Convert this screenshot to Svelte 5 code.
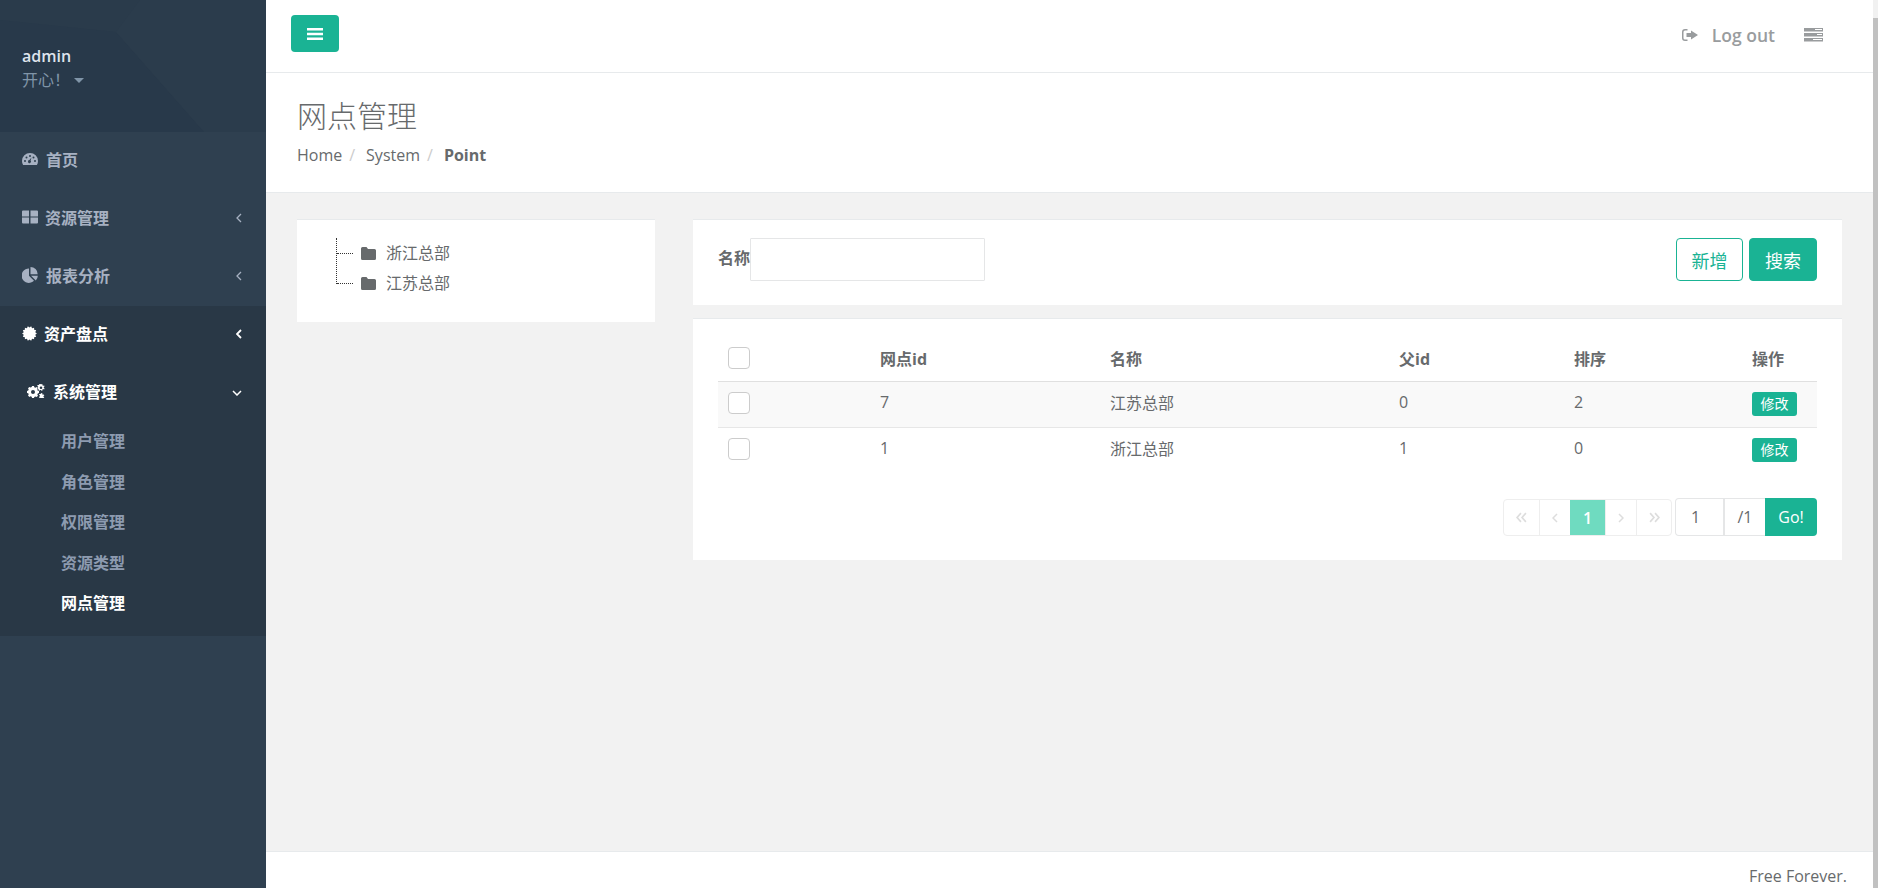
<script>
  const menu = [
    { label: "资源管理", icon: "grid" },
    { label: "报表分析", icon: "pie" }
  ];
  const subItems = ["用户管理", "角色管理", "权限管理", "资源类型", "网点管理"];
  const rows = [
    { id: 7, name: "江苏总部", parent: 0, sort: 2 },
    { id: 1, name: "浙江总部", parent: 1, sort: 0 }
  ];
  const tree = ["浙江总部", "江苏总部"];
  // toothed seal for the 资产盘点 icon
  const sealPoints = Array.from({ length: 28 }, (_, i) => {
    const r = i % 2 ? 5.9 : 7.4;
    const a = (i / 28) * Math.PI * 2;
    return `${(7.5 + r * Math.cos(a)).toFixed(2)},${(7.5 + r * Math.sin(a)).toFixed(2)}`;
  }).join(" ");
</script>

<div class="page">
  <nav class="sidebar">
    <div class="profile">
      <svg class="pattern" viewBox="0 0 266 132" preserveAspectRatio="none" aria-hidden="true">
        <polygon points="0,0 266,0 266,132 0,132" fill="#2a3b4b" />
        <polygon points="0,20 116,32 204,132 0,132" fill="#28394a" />
        <polygon points="116,32 140,0 266,0 266,132 204,132" fill="#2b3c4c" />
      </svg>
      <div class="profileText">
        <span class="userName">admin</span>
        <span class="mood">开心！<i class="caret"></i></span>
      </div>
    </div>

    <a class="navItem" href="#home">
      <svg class="navIcon" viewBox="0 0 16 12"><path fill="currentColor" fill-rule="evenodd" d="M8 0a8 8 0 0 1 8 8c0 1.500-.4 2.900-1.100 4H1.100A8 8 0 0 1 0 8a8 8 0 0 1 8-8zM3 7a1 1 0 1 0 0 2 1 1 0 0 0 0-2zm1.500-3.500a1 1 0 1 0 0 2 1 1 0 0 0 0-2zM8 2a1 1 0 1 0 0 2 1 1 0 0 0 0-2zm3.500 1.500a1 1 0 1 0 0 2 1 1 0 0 0 0-2zM13 7a1 1 0 1 0 0 2 1 1 0 0 0 0-2zM9.500 4.500 7.400 7.100a1.500 1.500 0 1 0 1.200.5z" /></svg>
      <span>首页</span>
    </a>
    {#each menu as item}
      <a class="navItem" href="#menu">
        {#if item.icon === "grid"}
          <svg class="navIcon gridIcon" viewBox="0 0 16 13"><path fill="currentColor" d="M0 1a1 1 0 0 1 1-1h6v6H0zM8.500 0H15a1 1 0 0 1 1 1v5H8.500zM0 7h7v6H1a1 1 0 0 1-1-1zM8.500 7H16v5a1 1 0 0 1-1 1H8.500z" /></svg>
        {:else}
          <svg class="navIcon" viewBox="0 0 16 16"><path fill="currentColor" d="M7 1.500V8.700l5 5A7.200 7.200 0 1 1 7 1.500zM8.500 0A7.200 7.200 0 0 1 15.700 7.200H8.500zM9 8.700h6.800a7.200 7.200 0 0 1-2 4.800z" /></svg>
        {/if}
        <span>{item.label}</span>
        <svg class="chevron" viewBox="0 0 6 10"><path d="M5 1 1 5l4 4" fill="none" stroke="currentColor" stroke-width="1.300" /></svg>
      </a>
    {/each}

    <div class="activeGroup">
      <a class="navItem active" href="#assets">
        <svg class="navIcon seal" viewBox="0 0 15 15"><polygon fill="currentColor" points={sealPoints} /></svg>
        <span>资产盘点</span>
        <svg class="chevron" viewBox="0 0 6 10"><path d="M5 1 1 5l4 4" fill="none" stroke="currentColor" stroke-width="1.800" /></svg>
      </a>
      <a class="navItem active nested" href="#system">
        <svg class="navIcon cogs" viewBox="0 0 18 14"><path fill="currentColor" fill-rule="evenodd" d="M5 2h2l.3 1.300 1.100.5 1.200-.7 1.400 1.400-.7 1.200.5 1.100 1.200.3v2l-1.200.3-.5 1.100.7 1.200-1.400 1.400-1.200-.7-1.100.5L7 14H5l-.3-1.300-1.100-.5-1.200.7L1 11.500l.7-1.200-.5-1.100L0 8.900v-2l1.200-.3.500-1.100L1 4.300l1.400-1.400 1.200.7 1.100-.5zM6 5.900a2 2 0 1 0 0 4 2 2 0 0 0 0-4zM14.500 0l1 .3-.1 1 .8.500.9-.4.500.9-.8.600v1l.8.600-.5.900-.9-.4-.8.500.1 1-1 .3-.6-.8h-.9l-.6.800-.9-.5.200-.9-.6-.7-1 .1.100-1 .9-.5 0-.9-.9-.5.400-1 1 .2.700-.6 0-1 1-.1.400.9h1zM14 2.500a1.300 1.300 0 1 0 0 2.600 1.300 1.300 0 0 0 0-2.600zM14.500 9l.9.300-.1.900.7.600.9-.3.400.9-.8.600v.9l.8.600-.4.500h-3.400l-.6-.3-.9.100.1-1 .8-.5-.1-1-.8-.5.400-.9.900.2.700-.6z" /></svg>
        <span>系统管理</span>
        <svg class="chevron down" viewBox="0 0 10 6"><path d="M1 1l4 4 4-4" fill="none" stroke="currentColor" stroke-width="1.500" /></svg>
      </a>
      <ul class="subMenu">
        {#each subItems as sub, i}
          <li class:current={i === subItems.length - 1}>{sub}</li>
        {/each}
      </ul>
    </div>
  </nav>

  <div class="main">
    <header class="topBar">
      <button class="toggle" aria-label="menu">
        <svg viewBox="0 0 16 14" width="16" height="14"><path fill="#fff" d="M0 1h16v2.500H0zM0 5.800h16v2.500H0zM0 10.500h16V13H0z" /></svg>
      </button>
      <div class="topRight">
        <svg class="logoutIcon" viewBox="0 0 16 14"><path fill="#999c9e" d="M5.500 1H3a3 3 0 0 0-3 3v6a3 3 0 0 0 3 3h2.500v-1.500H3A1.500 1.500 0 0 1 1.500 10V4A1.500 1.500 0 0 1 3 2.500h2.500zM9 2.500 16 7l-7 4.500V9H4.500V5H9z" /></svg>
        <span class="logout">Log out</span>
        <svg class="tasksIcon" viewBox="0 0 19 14"><path fill="#999c9e" fill-rule="evenodd" d="M0 0h19v3.500H0zM11 1v1h7V1zM0 5h19v3.500H0zM13 6v1h5V6zM0 10h19v3.500H0zM9 11v1h9v-1z" /></svg>
      </div>
    </header>

    <section class="titleBar">
      <h2>网点管理</h2>
      <div class="crumbs">
        <span>Home</span><i>/</i>
        <span>System</span><i>/</i>
        <strong>Point</strong>
      </div>
    </section>

    <div class="content">
      <aside class="treeCard">
        <ul class="tree">
          {#each tree as node}
            <li>
              <svg class="folder" viewBox="0 0 15 13"><path fill="#676a6c" d="M1.500 0h4l1.500 2h6.500A1.500 1.500 0 0 1 15 3.500v8a1.500 1.500 0 0 1-1.500 1.500h-12A1.500 1.500 0 0 1 0 11.500v-10A1.500 1.500 0 0 1 1.500 0z" /></svg>
              <span class="nodeName">{node}</span>
            </li>
          {/each}
        </ul>
      </aside>

      <div class="rightCol">
        <div class="card searchCard">
          <label class="field">
            <span class="fieldName">名称</span>
            <input type="text" />
          </label>
          <div class="actions">
            <button class="btn outline">新增</button>
            <button class="btn primary">搜索</button>
          </div>
        </div>

        <div class="card tableCard">
          <table>
            <colgroup>
              <col style="width:152px" /><col style="width:230px" /><col style="width:289px" />
              <col style="width:175px" /><col style="width:178px" /><col style="width:75px" />
            </colgroup>
            <thead>
              <tr>
                <th><span class="check"></span></th>
                <th>网点id</th>
                <th>名称</th>
                <th>父id</th>
                <th>排序</th>
                <th>操作</th>
              </tr>
            </thead>
            <tbody>
              {#each rows as row}
                <tr>
                  <td><span class="check"></span></td>
                  <td>{row.id}</td>
                  <td>{row.name}</td>
                  <td>{row.parent}</td>
                  <td>{row.sort}</td>
                  <td class="opCell"><span class="editTag">修改</span></td>
                </tr>
              {/each}
            </tbody>
          </table>

          <div class="pagerRow">
            <div class="pager">
              <span class="pageCell">
                <svg viewBox="0 0 10 10" width="11" height="11"><path d="M4.500 1 1 5l3.500 4M9 1 5.500 5 9 9" fill="none" stroke="currentColor" stroke-width="1.500" /></svg>
              </span>
              <span class="pageCell narrow">
                <svg viewBox="0 0 6 10" width="6" height="10"><path d="M5 1 1 5l4 4" fill="none" stroke="currentColor" stroke-width="1.500" /></svg>
              </span>
              <span class="pageCell on">1</span>
              <span class="pageCell narrow">
                <svg viewBox="0 0 6 10" width="6" height="10"><path d="M1 1l4 4-4 4" fill="none" stroke="currentColor" stroke-width="1.500" /></svg>
              </span>
              <span class="pageCell">
                <svg viewBox="0 0 10 10" width="11" height="11"><path d="M1 1l3.500 4L1 9M5.500 1 9 5 5.500 9" fill="none" stroke="currentColor" stroke-width="1.500" /></svg>
              </span>
            </div>
            <div class="goGroup">
              <span class="pageInput">1</span>
              <span class="pageTotal">/1</span>
              <button class="goBtn">Go!</button>
            </div>
          </div>
        </div>
      </div>
    </div>

    <footer class="footer">Free Forever.</footer>
  </div>

  <div class="scrollTrack"><div class="scrollThumb"></div></div>
</div>

<style>
  :global(body) {
    margin: 0;
    font-family: "Open Sans", "Noto Sans CJK SC", sans-serif;
    font-size: 16px;
    color: #676a6c;
    overflow: hidden;
  }
  .page {
    display: flex;
    width: 1878px;
    height: 888px;
    overflow: hidden;
  }
  .sidebar {
    width: 266px;
    flex: none;
    background: #2f4050;
    color: #a7b1c2;
  }
  .profile {
    position: relative;
    height: 132px;
    box-sizing: border-box;
    padding: 45px 0 0 22px;
    overflow: hidden;
  }
  .pattern {
    position: absolute;
    inset: 0;
    width: 100%;
    height: 100%;
  }
  .profileText {
    position: relative;
    display: flex;
    flex-direction: column;
  }
  .userName {
    color: #dfe4ed;
    font-weight: 600;
    line-height: 23px;
  }
  .mood {
    color: #8095a8;
    line-height: 24px;
    display: flex;
    align-items: center;
  }
  .caret {
    width: 0;
    height: 0;
    margin-left: 4px;
    border-left: 5px solid transparent;
    border-right: 5px solid transparent;
    border-top: 5px solid #8095a8;
  }
  .navItem {
    display: flex;
    align-items: center;
    height: 58px;
    box-sizing: border-box;
    padding: 0 0 4px 22px;
    position: relative;
    color: #a7b1c2;
    text-decoration: none;
    font-weight: 600;
  }
  .navIcon {
    width: 16px;
    height: 16px;
    flex: none;
    margin-right: 8px;
  }
  .gridIcon {
    margin-right: 7px;
  }
  .chevron {
    position: absolute;
    right: 24px;
    top: 23px;
    width: 6px;
    height: 10px;
  }
  .chevron.down {
    width: 10px;
    height: 6px;
    top: 26px;
  }
  .activeGroup {
    background: #293846;
    height: 330px;
  }
  .navItem.active {
    color: #fff;
  }
  .seal {
    width: 15px;
    height: 15px;
    margin-right: 7px;
  }
  .nested {
    padding-left: 27px;
  }
  .cogs {
    width: 18px;
    height: 14px;
    margin-right: 8px;
  }
  .subMenu {
    list-style: none;
    margin: 0;
    padding: 0 0 0 61px;
  }
  .subMenu li {
    height: 40.500px;
    line-height: 40.500px;
    position: relative;
    top: -1px;
    font-weight: 600;
    color: #8d9bb0;
  }
  .subMenu li.current {
    color: #fff;
  }
  .main {
    flex: 1;
    display: flex;
    flex-direction: column;
    background: #f2f2f2;
    min-width: 0;
  }
  .topBar {
    height: 73px;
    flex: none;
    box-sizing: border-box;
    background: #fff;
    border-bottom: 1px solid #e7eaec;
    display: flex;
    align-items: flex-start;
    justify-content: space-between;
    padding: 15px 50px 0 25px;
  }
  .toggle {
    width: 48px;
    height: 37px;
    background: #1ab394;
    border: 0;
    border-radius: 4px;
    padding: 0;
    display: flex;
    align-items: center;
    justify-content: center;
  }
  .topRight {
    display: flex;
    align-items: center;
    height: 39px;
    color: #999c9e;
    font-weight: 600;
  }
  .logoutIcon {
    width: 16px;
    height: 14px;
    margin-right: 14px;
  }
  .logout {
    font-size: 17.500px;
    margin-right: 29px;
  }
  .tasksIcon {
    width: 19px;
    height: 14px;
  }
  .titleBar {
    height: 120px;
    flex: none;
    box-sizing: border-box;
    background: #fff;
    border-bottom: 1px solid #e7eaec;
    padding: 0 0 0 31px;
  }
  h2 {
    margin: 22px 0 0;
    font-size: 30px;
    font-weight: 300;
    line-height: 42px;
  }
  .crumbs {
    margin-top: 6px;
    line-height: 24px;
    display: flex;
  }
  .crumbs i {
    font-style: normal;
    color: #ccc;
    margin: 0 11px 0 7px;
  }
  .crumbs strong {
    font-weight: 700;
  }
  .content {
    flex: 1;
    display: flex;
    align-items: flex-start;
    gap: 38px;
    padding: 26px 31px 0 31px;
    min-height: 0;
  }
  .treeCard {
    width: 358px;
    height: 103px;
    flex: none;
    background: #fff;
    border-top: 1px solid #e7eaec;
    box-sizing: border-box;
    padding-top: 18px;
  }
  .tree {
    list-style: none;
    margin: 0 0 0 39px;
    padding: 0;
    height: 46px;
    border-left: 1px dotted #333;
  }
  .tree li {
    height: 30px;
    display: flex;
    align-items: center;
    position: relative;
    padding-left: 24px;
  }
  .tree li::before {
    content: "";
    position: absolute;
    left: 0;
    top: 15px;
    width: 16px;
    border-top: 1px dotted #333;
  }
  .nodeName {
    position: relative;
    top: -1px;
  }
  .folder {
    width: 15px;
    height: 13px;
    margin-right: 10px;
  }
  .rightCol {
    flex: 1;
    min-width: 0;
    display: flex;
    flex-direction: column;
    gap: 13px;
  }
  .card {
    background: #fff;
    border-top: 1px solid #e7eaec;
    box-sizing: border-box;
  }
  .searchCard {
    height: 86px;
    display: flex;
    align-items: flex-start;
    justify-content: space-between;
    padding: 18px 25px 0;
  }
  .field {
    display: flex;
    align-items: center;
    font-weight: 700;
  }
  .fieldName {
    position: relative;
    top: -3px;
  }
  .field input {
    width: 235px;
    height: 43px;
    box-sizing: border-box;
    border: 1px solid #e5e6e7;
    border-radius: 1px;
    outline: none;
  }
  .actions {
    display: flex;
    gap: 6px;
  }
  .btn {
    height: 43px;
    border-radius: 4px;
    font: inherit;
    font-size: 18px;
    padding: 0;
  }
  .outline {
    width: 67px;
    background: #fff;
    border: 1px solid #1ab394;
    color: #1ab394;
  }
  .primary {
    width: 68px;
    background: #1ab394;
    border: 1px solid #1ab394;
    color: #fff;
  }
  .tableCard {
    height: 242px;
    padding: 0 25px;
  }
  table {
    width: 1099px;
    table-layout: fixed;
    border-collapse: collapse;
  }
  th {
    height: 62px;
    padding: 16px 0 0 10px;
    box-sizing: border-box;
    text-align: left;
    font-weight: 700;
    border-bottom: 1px solid #e0e0e0;
  }
  td {
    height: 46px;
    box-sizing: border-box;
    padding: 0 0 4px 10px;
    border-bottom: 1px solid #e7e7e7;
  }
  td:first-child {
    padding-bottom: 2px;
  }
  td.opCell {
    padding-bottom: 0;
  }
  tbody tr:first-child td {
    background: #f9f9f9;
  }
  tbody tr:last-child td {
    border-bottom: 0;
  }
  .check {
    display: block;
    width: 20px;
    height: 20px;
    border: 1px solid #ccc;
    border-radius: 4px;
    background: #fff;
  }
  .editTag {
    display: inline-block;
    width: 45px;
    height: 24px;
    line-height: 24px;
    text-align: center;
    font-size: 14px;
    color: #fff;
    background: #1ab394;
    border-radius: 3px;
  }
  .pagerRow {
    display: flex;
    justify-content: flex-end;
    align-items: flex-end;
    gap: 3px;
    margin-top: 25px;
  }
  .pager {
    display: flex;
    height: 37px;
    box-sizing: border-box;
    border: 1px solid #eee;
    border-radius: 4px;
    color: #ddd;
  }
  .pageCell {
    width: 35px;
    box-sizing: border-box;
    display: flex;
    align-items: center;
    justify-content: center;
    border-left: 1px solid #eee;
  }
  .pageCell:first-child {
    border-left: 0;
  }
  .pageCell.narrow {
    width: 31px;
  }
  .pageCell.on {
    background: #6fdbc0;
    color: #fff;
    font-weight: 600;
    border-left: 0;
  }
  .goGroup {
    display: flex;
    height: 38px;
  }
  .pageInput {
    width: 50px;
    box-sizing: border-box;
    border: 1px solid #e5e6e7;
    border-right-width: 2px;
    border-radius: 4px 0 0 4px;
    padding-left: 15px;
    line-height: 36px;
  }
  .pageTotal {
    width: 40px;
    box-sizing: border-box;
    border-top: 1px solid #e5e6e7;
    border-bottom: 1px solid #e5e6e7;
    text-align: center;
    line-height: 36px;
  }
  .goBtn {
    width: 52px;
    border: 0;
    background: #1ab394;
    color: #fff;
    border-radius: 0 4px 4px 0;
    font: inherit;
  }
  .footer {
    height: 37px;
    flex: none;
    box-sizing: border-box;
    background: #fff;
    border-top: 1px solid #e7eaec;
    text-align: right;
    padding: 12px 26px 0 0;
    line-height: 24px;
  }
  .scrollTrack {
    width: 5px;
    flex: none;
    background: #f1f1f1;
    padding-top: 18px;
    box-sizing: border-box;
  }
  .scrollThumb {
    height: 100%;
    background: #c1c1c1;
  }
</style>
